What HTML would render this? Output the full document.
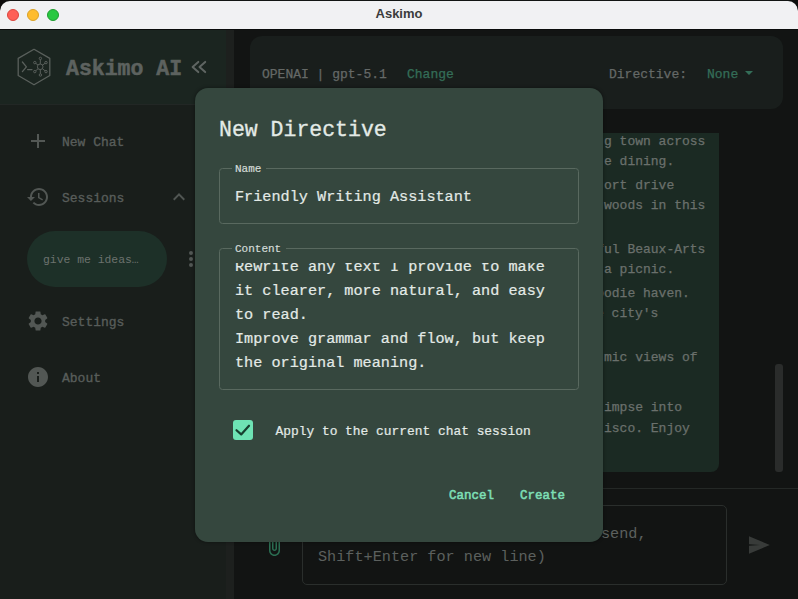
<!DOCTYPE html>
<html><head><meta charset="utf-8">
<style>
*{margin:0;padding:0;box-sizing:border-box}
html,body{width:798px;height:599px;overflow:hidden;background:#0c0c0c}
body{position:relative;font-family:"Liberation Mono",monospace}
.abs{position:absolute}
svg{position:absolute;overflow:visible}
#win{position:absolute;left:0;top:0;width:798px;height:599px;background:#121413;border-radius:10px 10px 0 0;overflow:hidden}
#titlebar{position:absolute;left:0;top:1px;width:798px;height:28px;border-radius:10px 10px 0 0;background:#f1f1f3}
#tline{position:absolute;left:0;top:29px;width:798px;height:1px;background:#0a0b0b}
#titlebar .t{position:absolute;left:0;width:798px;top:5px;text-align:center;font-family:"Liberation Sans",sans-serif;font-weight:bold;font-size:13px;color:#3b3b3b}
.dot{position:absolute;top:7.5px;width:12px;height:12px;border-radius:50%}
#sidebar{position:absolute;left:0;top:30px;width:234px;height:570px;background:#191e1b}
#sbhead{position:absolute;left:0;top:0;width:234px;height:75px;background:#1b2520;border-bottom:1px solid #222725}
.sbtxt{position:absolute;font-size:13px;color:#585d5a;white-space:pre;-webkit-text-stroke:0.35px #585d5a}
#topbar{position:absolute;left:250px;top:36px;width:533px;height:73px;background:#191e1c;border-radius:12px}
.tb{position:absolute;font-size:13px;color:#656967;white-space:pre;-webkit-text-stroke:0.25px currentColor}
#bubble{position:absolute;left:540px;top:133px;width:179px;height:339px;background:#1b2a23;border-radius:0 0 8px 0}
.bt{position:absolute;font-size:13px;color:#6a706c;white-space:pre;left:604px;-webkit-text-stroke:0.25px #6a706c}
#sep{position:absolute;left:234px;top:488px;width:564px;height:1px;background:#242826}
#input{position:absolute;left:302px;top:505px;width:425px;height:80px;border:1px solid #2a2e2c;border-radius:5px}
#scroll{position:absolute;left:775px;top:364px;width:8px;height:108px;border-radius:3px;background:#2a2c2b}
#modal{position:absolute;left:195px;top:88px;width:408px;height:454px;background:#35473e;border-radius:13px;box-shadow:0 0 3px 1px rgba(0,0,0,0.25)}
.mt{position:absolute;color:#e3eae6;white-space:pre;-webkit-text-stroke:0.2px #e3eae6}
.field{position:absolute;border:1px solid #59695f;border-radius:3.5px}
.lbl{position:absolute;font-size:11px;color:#d3dbd7;-webkit-text-stroke:0.2px #d3dbd7;background:#35473e;padding:0 5px 0 3px;line-height:13px}
.btn{position:absolute;font-size:12.5px;color:#7ddfb5;-webkit-text-stroke:0.55px #7ddfb5}
</style></head><body>
<div id="win">
  <div id="titlebar">
    <div class="dot" style="left:7px;background:#fe5f57;border:0.5px solid #d9463f"></div>
    <div class="dot" style="left:27px;background:#febc2e;border:0.5px solid #d9a128"></div>
    <div class="dot" style="left:47px;background:#28c840;border:0.5px solid #1f9a30"></div>
    <div class="t">Askimo</div>
  </div>
  <div id="tline"></div>
  <div id="sidebar">
    <div id="sbhead"></div>
  </div>
  <div class="abs" style="left:226px;top:30px;width:8px;height:569px;background:#1d201e"></div>
  <div id="topbar"></div>
  <div class="tb" style="left:262px;top:67px">OPENAI | gpt-5.1</div>
  <div class="tb" style="left:407px;top:67px;color:#346e58">Change</div>
  <div class="tb" style="left:609px;top:67px">Directive:</div>
  <div class="tb" style="left:707px;top:67px;color:#346e58">None</div>
  <svg style="left:0;top:0" width="798" height="599"><path d="M745 71 L753 71 L749 75 Z" fill="#346e58"/></svg>

  <div id="bubble"></div>
  <div class="bt" style="top:134px">g town across</div>
  <div class="bt" style="top:154px">e dining.</div>
  <div class="bt" style="top:178px">ort drive</div>
  <div class="bt" style="top:198px">woods in this</div>
  <div class="bt" style="top:242px;left:596.2px">ful Beaux-Arts</div>
  <div class="bt" style="top:262px">a picnic.</div>
  <div class="bt" style="top:286px;left:596.2px">oodie haven.</div>
  <div class="bt" style="top:306px;left:596px">e city's</div>
  <div class="bt" style="top:350px">mic views of</div>
  <div class="bt" style="top:400px">impse into</div>
  <div class="bt" style="top:421px">isco. Enjoy</div>
  <div id="scroll"></div>
  <div id="sep"></div>
  <div id="input"></div>
  <div class="abs" style="left:601px;top:525px;font-size:15.2px;color:#5c605e;white-space:pre">send,</div>
  <div class="abs" style="left:318px;top:548px;font-size:15.2px;color:#5c605e;white-space:pre">Shift+Enter for new line)</div>
  <svg style="left:747px;top:533px" width="24" height="24" viewBox="0 0 24 24"><path d="M2 3.2 L22.8 12 L2 20.8 L2 12.7 L13 12 L2 11.3 Z" fill="#383b39"/></svg>
  <svg style="left:262px;top:533px" width="24" height="24" viewBox="0 0 24 24"><path d="M16.5 6v11.5c0 2.21-1.790 4-4 4s-4-1.79-4-4V5c0-1.38 1.12-2.5 2.5-2.5s2.5 1.12 2.5 2.5v10.5c0 .55-.45 1-1 1s-1-.45-1-1V6H10v9.5c0 1.38 1.12 2.5 2.5 2.5s2.5-1.120 2.5-2.5V5c0-2.21-1.79-4-4-4S7 2.79 7 5v12.5c0 3.04 2.46 5.5 5.5 5.5s5.5-2.46 5.5-5.5V6h-1.5z" fill="#2b6e52"/></svg>

  <!-- sidebar content -->
  <svg style="left:0;top:0" width="234" height="120">
    <g fill="none" stroke="#5a605c" stroke-width="1.3" stroke-linejoin="round" stroke-linecap="round">
      <path d="M34 49.3 L49.8 58.4 L49.8 75.5 L34 84.8 L18.2 75.5 L18.2 58.4 Z"/>
      <path d="M22.4 62 L26.4 66.8 L22.4 71.6"/>
      <path d="M27.6 69.6 L32 69.6"/>
      <path d="M40.2 66.8 L40.4 58.4 M40.2 66.8 L46 62.6 M40.2 66.8 L46 71.6 M40.2 66.8 L40.4 75 M40.2 66.8 L34.8 71.6 M40.2 66.8 L34.8 62.6" stroke-width="1"/>
    </g>
    <g fill="#1c2521" stroke="#5a605c" stroke-width="1">
      <circle cx="40.2" cy="66.8" r="2.8"/>
      <circle cx="40.4" cy="58.4" r="1.2"/>
      <circle cx="46" cy="62.6" r="1.2"/>
      <circle cx="46" cy="71.6" r="1.2"/>
      <circle cx="40.4" cy="75" r="1.2"/>
      <circle cx="34.8" cy="71.6" r="1.2"/>
      <circle cx="34.8" cy="62.6" r="1.2"/>
    </g>
    <g fill="none" stroke="#5f6562" stroke-width="2" stroke-linecap="round" stroke-linejoin="round">
      <path d="M198.3 61.9 L192.6 66.9 L198.3 72.1"/>
      <path d="M205.2 61.9 L199.5 66.9 L205.2 72.1"/>
    </g>
  </svg>
  <div class="abs" style="left:66px;top:57px;font-size:21.5px;font-weight:bold;color:#5d625f;white-space:pre;-webkit-text-stroke:0.5px #5d625f">Askimo AI</div>

  <svg style="left:26px;top:129px" width="24" height="24" viewBox="0 0 24 24"><path d="M19 13h-6v6h-2v-6H5v-2h6V5h2v6h6v2z" fill="#535855"/></svg>
  <div class="sbtxt" style="left:62px;top:135px">New Chat</div>
  <svg style="left:25.5px;top:185px" width="24" height="24" viewBox="0 0 24 24"><path d="M13 3c-4.97 0-9 4.03-9 9H1l3.89 3.89.07.14L9 12H6c0-3.87 3.13-7 7-7s7 3.13 7 7-3.13 7-7 7c-1.93 0-3.68-.79-4.94-2.06l-1.42 1.42C8.27 19.990 10.51 21 13 21c4.97 0 9-4.03 9-9s-4.03-9-9-9zm-1 5v5l4.28 2.54.72-1.21-3.5-2.08V8H12z" fill="#525754"/></svg>
  <div class="sbtxt" style="left:62px;top:191px">Sessions</div>
  <svg style="left:167px;top:185px" width="24" height="24" viewBox="0 0 24 24"><path d="M12 8l-6 6 1.41 1.41L12 10.83l4.59 4.58L18 14z" fill="#505552"/></svg>
  <div class="abs" style="left:27px;top:231px;width:140px;height:56px;border-radius:28px;background:#1d3028"></div>
  <div class="abs" style="left:43px;top:254px;font-size:11.4px;color:#6c726e;white-space:pre">give me ideas…</div>
  <svg style="left:179px;top:247px" width="24" height="24" viewBox="0 0 24 24"><circle cx="12" cy="6" r="2" fill="#525754"/><circle cx="12" cy="12" r="2" fill="#525754"/><circle cx="12" cy="18" r="2" fill="#525754"/></svg>
  <svg style="left:26px;top:309px" width="24" height="24" viewBox="0 0 24 24"><path d="M19.14 12.94c.04-.3.06-.61.06-.94 0-.32-.02-.64-.07-.94l2.03-1.58c.18-.14.23-.41.12-.61l-1.920-3.32c-.12-.22-.37-.29-.59-.22l-2.39.96c-.5-.38-1.03-.7-1.62-.94l-.36-2.54c-.04-.24-.24-.41-.48-.41h-3.84c-.24 0-.43.17-.47.41l-.36 2.54c-.59.24-1.13.57-1.62.94l-2.39-.96c-.22-.08-.47 0-.59.22L2.74 8.87c-.12.21-.08.47.12.61l2.03 1.58c-.05.3-.09.63-.09.94s.02.64.07.94l-2.03 1.58c-.18.14-.23.41-.12.61l1.92 3.32c.12.22.37.29.59.22l2.39-.96c.5.38 1.03.7 1.62.94l.36 2.54c.05.24.24.41.48.41h3.84c.24 0 .44-.17.47-.41l.36-2.54c.59-.24 1.13-.56 1.62-.94l2.39.96c.22.08.47 0 .59-.22l1.92-3.32c.12-.22.07-.47-.12-.61l-2.01-1.58zM12 15.6c-1.98 0-3.6-1.62-3.6-3.6s1.62-3.6 3.6-3.6 3.6 1.62 3.6 3.6-1.62 3.6-3.6 3.6z" fill="#525754"/></svg>
  <div class="sbtxt" style="left:62px;top:315px">Settings</div>
  <svg style="left:26px;top:365px" width="24" height="24" viewBox="0 0 24 24"><path d="M12 2C6.48 2 2 6.48 2 12s4.48 10 10 10 10-4.48 10-10S17.52 2 12 2zm1 15h-2v-6h2v6zm0-8h-2V7h2v2z" fill="#525754"/></svg>
  <div class="sbtxt" style="left:62px;top:371px">About</div>

  <div id="modal"></div>
  <div class="mt" style="left:219px;top:118px;font-size:21.5px;-webkit-text-stroke:0.3px #e3eae6">New Directive</div>
  <div class="field" style="left:219px;top:168px;width:360px;height:56px"></div>
  <div class="lbl" style="left:232px;top:163px">Name</div>
  <div class="mt" style="left:235px;top:188px;font-size:15.2px">Friendly Writing Assistant</div>
  <div class="field" style="left:219px;top:248px;width:360px;height:142px"></div>
  <div class="lbl" style="left:232px;top:243px">Content</div>
  <div class="abs" style="left:220px;top:263px;width:350px;height:120px;overflow:hidden">
  <div class="mt" style="left:15px;top:-8px;font-size:15.2px;line-height:24px">Rewrite any text I provide to make
it clearer, more natural, and easy
to read.
Improve grammar and flow, but keep
the original meaning.</div>
  </div>
  <div class="abs" style="left:233px;top:420px;width:20px;height:20px;border-radius:3px;background:#6ee3b4"></div>
  <svg style="left:0;top:0" width="798" height="599"><path d="M236.5 430.2 L241.2 434.4 L249 425.7" fill="none" stroke="#17402f" stroke-width="2.2" stroke-linecap="round" stroke-linejoin="round"/></svg>
  <div class="mt" style="left:275.5px;top:424px;font-size:12.9px">Apply to the current chat session</div>
  <div class="btn" style="left:449px;top:489px">Cancel</div>
  <div class="btn" style="left:520px;top:489px">Create</div>
</div>
</body></html>
